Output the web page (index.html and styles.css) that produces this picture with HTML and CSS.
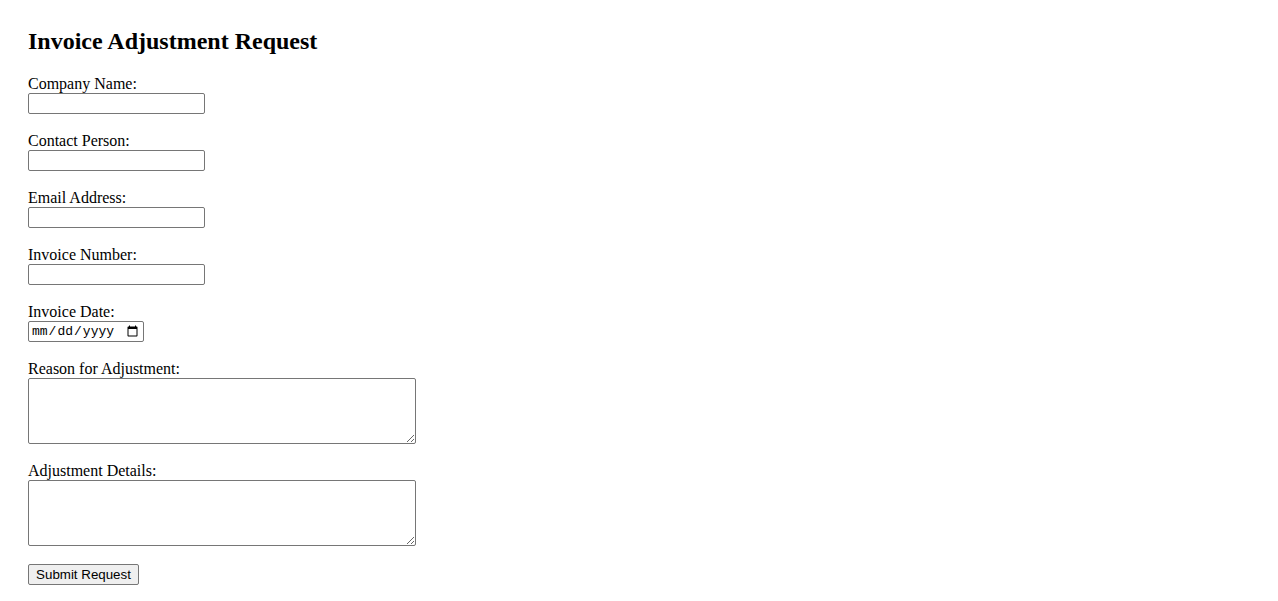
FILE: index.html
```html
<!DOCTYPE html>
<html lang="en">
<head>
    <meta charset="UTF-8">
    <meta name="viewport" content="width=device-width, initial-scale=1.0">
    <title>Invoice Adjustment Request</title>
    <link rel="stylesheet" href="styles.css">
</head>
<body>

    <h2>Invoice Adjustment Request</h2>

    <form class="request-form" onsubmit="return false">
        <div class="field">
            <label for="company">Company Name:</label>
            <input type="text" id="company" name="company">
        </div>
        <div class="field">
            <label for="contact">Contact Person:</label>
            <input type="text" id="contact" name="contact">
        </div>
        <div class="field">
            <label for="email">Email Address:</label>
            <input type="email" id="email" name="email">
        </div>
        <div class="field">
            <label for="invoice">Invoice Number:</label>
            <input type="text" id="invoice" name="invoice">
        </div>
        <div class="field">
            <label for="date">Invoice Date:</label>
            <input type="date" id="date" name="date" class="date-input">
        </div>
        <div class="field">
            <label for="reason">Reason for Adjustment:</label>
            <textarea id="reason" name="reason"></textarea>
        </div>
        <div class="field">
            <label for="details">Adjustment Details:</label>
            <textarea id="details" name="details"></textarea>
        </div>
        <button type="submit" class="submit-btn">Submit Request</button>
    </form>

</body>
</html>
```

FILE: styles.css
```css
body {
    font-family: 'Liberation Serif', 'Times New Roman', serif;
    font-size: 16px;
    color: rgb(0, 0, 0);
    background-color: rgb(255, 255, 255);
    margin: 0;
    padding: 28px;
}

h2 {
    font-size: 24px;
    font-weight: bold;
    line-height: 26px;
    margin: 0 0 21px 0;
}

.field {
    margin-bottom: 18px;
}

.field label {
    display: block;
    line-height: 18px;
}

.field input,
.field textarea {
    display: block;
    box-sizing: border-box;
    margin: 0;
    width: 177px;
    height: 21px;
    border: 1px solid rgb(118, 118, 118);
    border-radius: 2px;
    background-color: rgb(255, 255, 255);
}

.field .date-input {
    width: 116px;
    font-family: 'Liberation Mono', 'Courier New', monospace;
    font-size: 13px;
    padding: 0 2px;
}

.field textarea {
    width: 388px;
    height: 66px;
    font-family: 'Liberation Mono', monospace;
    font-size: 13px;
}

.submit-btn {
    display: block;
    box-sizing: border-box;
    margin: 0;
    width: 111px;
    height: 21px;
    padding: 1px 6px;
    font-family: 'Liberation Sans', Arial, sans-serif;
    font-size: 13.33px;
    color: rgb(0, 0, 0);
    background-color: rgb(239, 239, 239);
    border: 1px solid rgb(118, 118, 118);
    border-radius: 2px;
}
```
